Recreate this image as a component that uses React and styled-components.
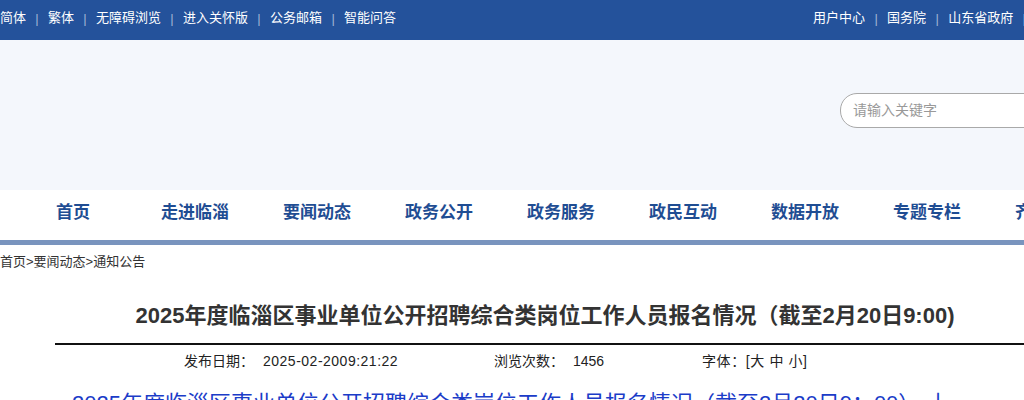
import React from "react";
import styled, { createGlobalStyle } from "styled-components";

const Global = createGlobalStyle`
  html, body { margin: 0; padding: 0; overflow: hidden; background: #fff; }
  body { font-family: "Liberation Sans", "Noto Sans CJK SC", sans-serif; color: #333; }
  * { box-sizing: border-box; }
`;

const Page = styled.div`
  width: 100%;
  overflow: hidden;
`;

const TopBar = styled.div`
  height: 40px;
  background: #24529b;
  display: flex;
  align-items: center;
  padding-bottom: 4px;
  white-space: nowrap;
`;

const LinkGroup = styled.div`
  display: flex;
  align-items: center;
  flex-shrink: 0;
  margin-left: ${(p) => p.$offset || 0}px;
`;

const TopLink = styled.a`
  color: #fff;
  font-size: 13px;
  line-height: 18px;
  text-decoration: none;
`;

const Sep = styled.span`
  color: #9fb3d6;
  font-size: 13px;
  margin: 0 8px 0 8px;
  width: 6px;
  text-align: center;
`;

const Banner = styled.div`
  height: 150px;
  background: #f4f7fc;
  display: flex;
  align-items: flex-start;
  padding-top: 53px;
  padding-left: 840px;
`;

const Search = styled.div`
  width: 260px;
  height: 35px;
  flex-shrink: 0;
  border: 1px solid #a9a9a9;
  border-radius: 17px;
  background: #fff;
  display: flex;
  align-items: center;
  padding: 0 0 4px 12px;
  color: #999;
  font-size: 14px;
`;

const Nav = styled.nav`
  height: 55px;
  background: #fff;
  border-bottom: 5px solid #7994be;
  display: flex;
  padding-left: 12px;
  overflow: hidden;
`;

const NavItem = styled.a`
  flex: 0 0 122px;
  text-align: center;
  line-height: 46px;
  font-size: 17px;
  font-weight: bold;
  color: #1f4d93;
  text-decoration: none;
  white-space: nowrap;
`;

const Crumbs = styled.div`
  padding: 8px 0;
  font-size: 13px;
  line-height: 18px;
  color: #333;
`;

const Article = styled.div`
  width: 1090px;
  padding: 0 55px;
`;

const Title = styled.h1`
  margin: 22px 0 0;
  padding-bottom: 12px;
  border-bottom: 2px solid #111;
  font-size: 22px;
  line-height: 30px;
  font-weight: bold;
  color: #333;
  text-align: center;
  white-space: nowrap;
`;

const Meta = styled.div`
  display: flex;
  padding: 6px 0 0 129px;
  font-size: 14px;
  line-height: 20px;
  color: #222;
  white-space: nowrap;
`;

const MetaItem = styled.span`
  flex: 0 0 ${(p) => (p.$w ? `${p.$w}px` : "auto")};
  letter-spacing: ${(p) => p.$spread || 0}px;
`;

const MetaValue = styled.span`
  margin-left: 9px;
  letter-spacing: ${(p) => p.$spread || 0}px;
`;

const BodyTitle = styled.p`
  margin: 18px 0 0 17px;
  font-size: 22px;
  line-height: 30px;
  color: #1b3cc8;
  white-space: nowrap;
`;

const leftLinks = ["简体", "繁体", "无障碍浏览", "进入关怀版", "公务邮箱", "智能问答"];
const rightLinks = ["用户中心", "国务院", "山东省政府"];
const navItems = ["首页", "走进临淄", "要闻动态", "政务公开", "政务服务", "政民互动", "数据开放", "专题专栏", "齐都文化"];

export default function App() {
  return (
    <Page>
      <Global />
      <TopBar>
        <LinkGroup>
          {leftLinks.map((t, i) => (
            <React.Fragment key={t}>
              {i > 0 && <Sep>|</Sep>}
              <TopLink>{t}</TopLink>
            </React.Fragment>
          ))}
        </LinkGroup>
        <LinkGroup $offset={417}>
          {rightLinks.map((t, i) => (
            <React.Fragment key={t}>
              {i > 0 && <Sep>|</Sep>}
              <TopLink>{t}</TopLink>
            </React.Fragment>
          ))}
          <Sep>|</Sep>
          <TopLink>登录</TopLink>
        </LinkGroup>
      </TopBar>
      <Banner>
        <Search>请输入关键字</Search>
      </Banner>
      <Nav>
        {navItems.map((t) => (
          <NavItem key={t}>{t}</NavItem>
        ))}
      </Nav>
      <Crumbs>首页&gt;要闻动态&gt;通知公告</Crumbs>
      <Article>
        <Title>2025年度临淄区事业单位公开招聘综合类岗位工作人员报名情况（截至2月20日9:00)</Title>
        <Meta>
          <MetaItem $w={310}>发布日期：<MetaValue $spread={0.5}>2025-02-2009:21:22</MetaValue></MetaItem>
          <MetaItem $w={208}>浏览次数：<MetaValue>1456</MetaValue></MetaItem>
          <MetaItem $spread={0.6}>字体：[大 中 小]</MetaItem>
        </Meta>
        <BodyTitle>2025年度临淄区事业单位公开招聘综合类岗位工作人员报名情况（截至2月20日9：00）-上</BodyTitle>
      </Article>
    </Page>
  );
}
